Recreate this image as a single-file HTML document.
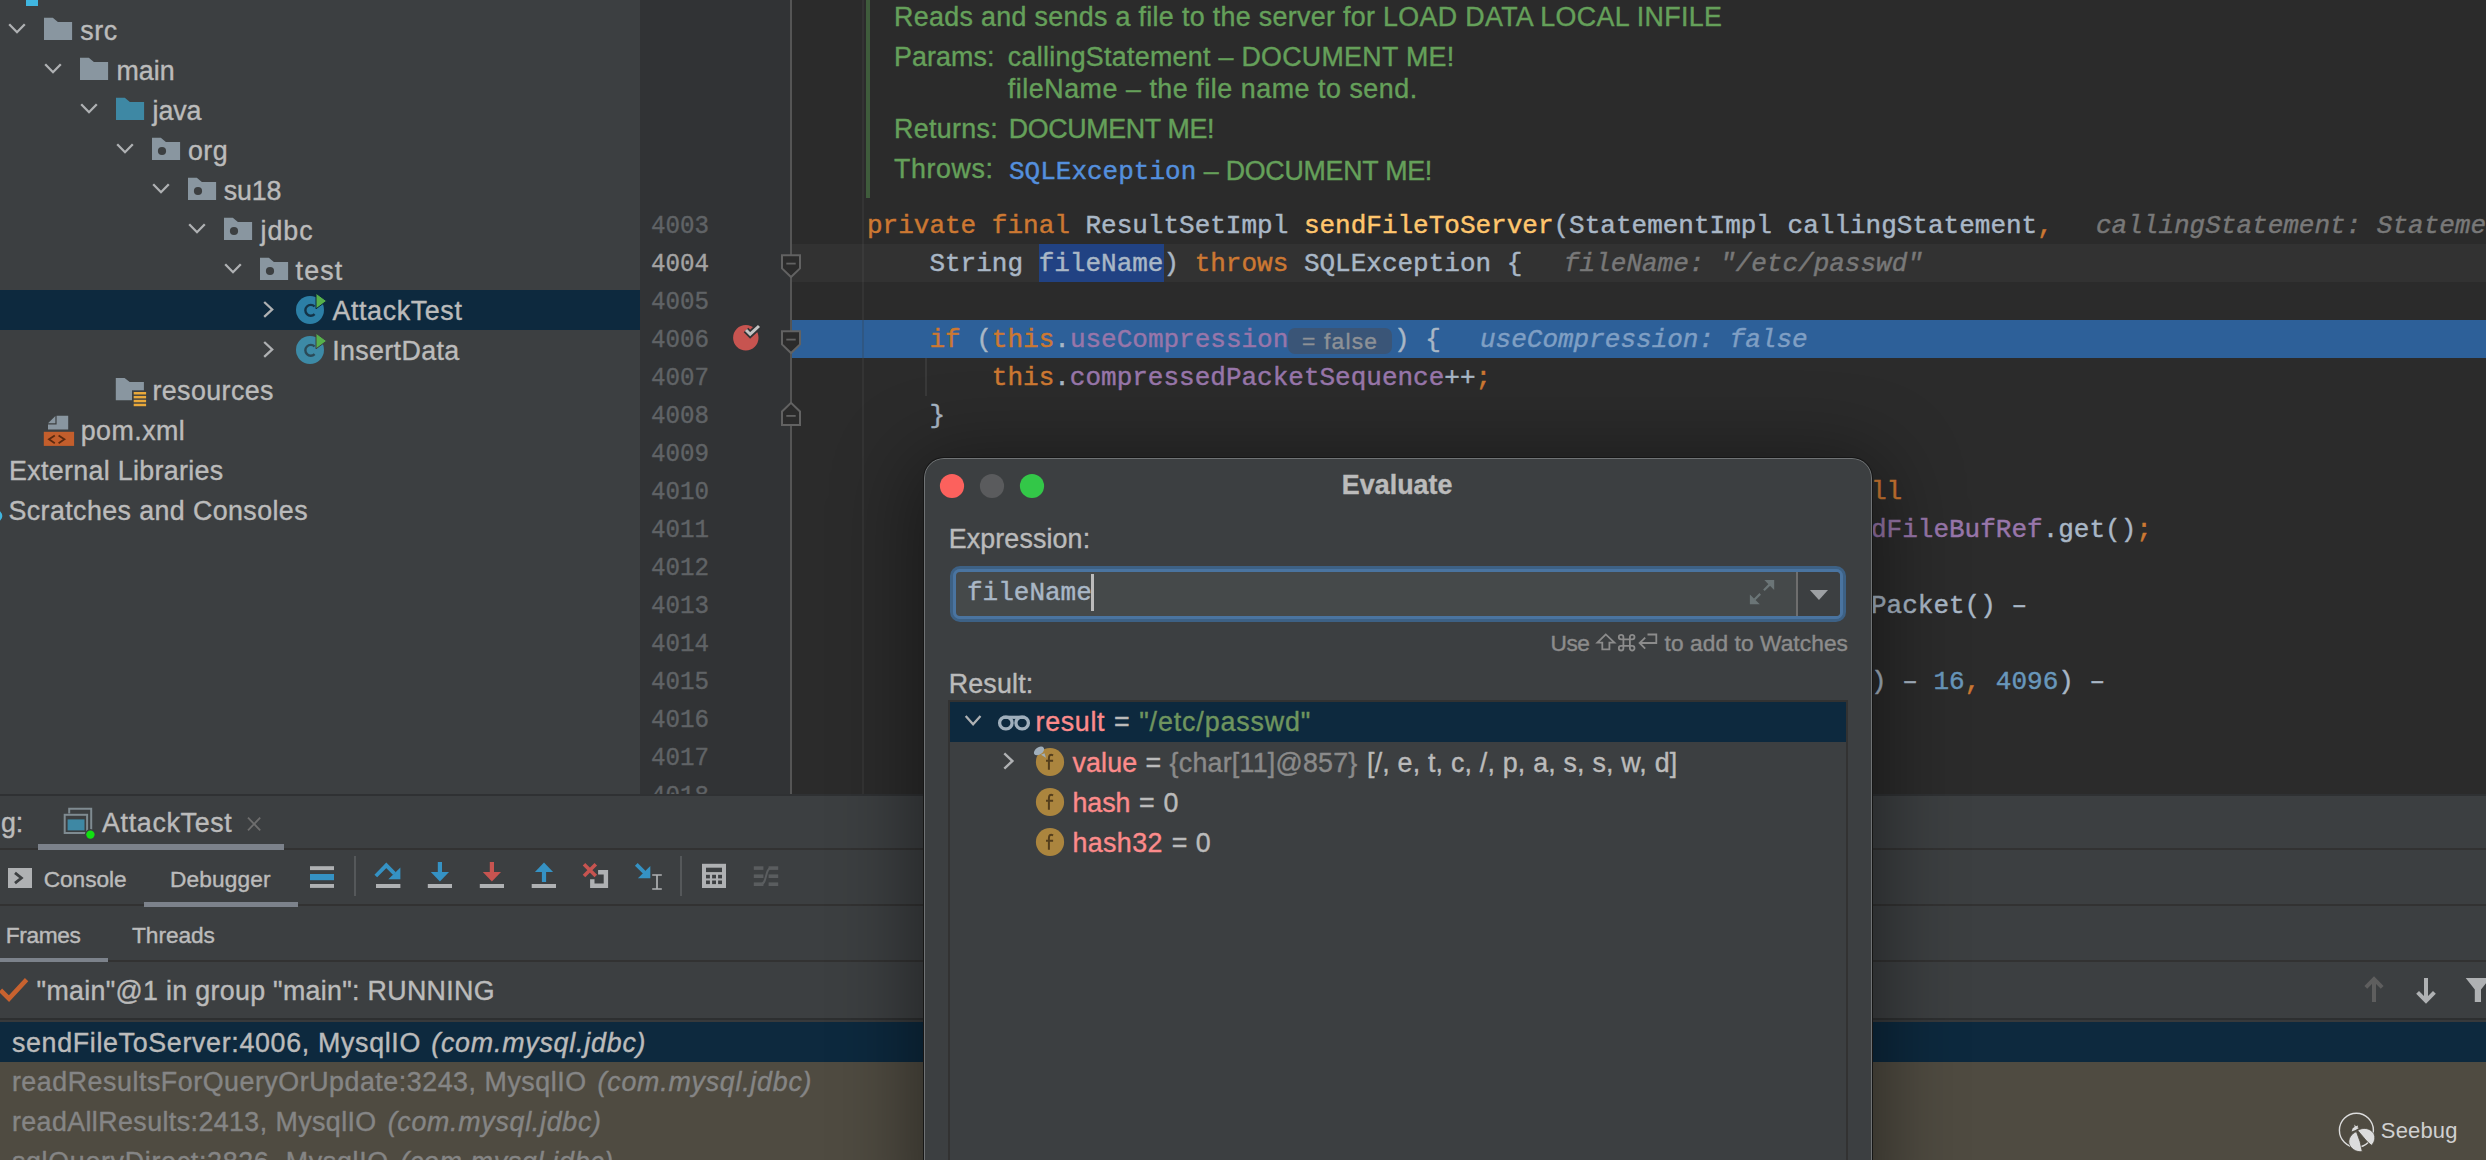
<!DOCTYPE html>
<html><head><meta charset="utf-8"><title>Evaluate</title>
<style>
html,body{margin:0;padding:0;}
body{width:2486px;height:1160px;overflow:hidden;background:#3c3f41;position:relative;font-family:"Liberation Sans",sans-serif;}
.abs{position:absolute;}
.t{position:absolute;white-space:pre;line-height:1em;font-family:"Liberation Sans",sans-serif;-webkit-text-stroke:0.4px currentColor;}
.code{position:absolute;white-space:pre;font-family:"Liberation Mono",monospace;font-size:26px;line-height:38px;height:38px;color:#a9b7c6;-webkit-text-stroke:0.45px currentColor;}
.k{color:#cc7832}.m{color:#ffc66d}.f{color:#9876aa}.n{color:#6897bb}
.h{color:#787878;font-style:italic}
.ln{position:absolute;left:651px;transform:scaleX(.93);transform-origin:0 0;font-family:"Liberation Mono",monospace;font-size:26px;line-height:38px;height:38px;color:#606366;white-space:pre;-webkit-text-stroke:0.4px currentColor;}
#editor{position:absolute;left:640px;top:0;width:1846px;height:794px;overflow:hidden;background:#2b2b2b;}
#dlg{position:absolute;left:924px;top:458px;width:948px;height:760px;background:#3c3f41;border-radius:20px 20px 0 0;box-shadow:0 0 0 1px #161616,0 12px 80px 12px rgba(0,0,0,.42);overflow:hidden;}
#dlg:after{content:"";position:absolute;left:0;top:0;right:0;bottom:0;border:1.4px solid #707375;border-radius:20px 20px 0 0;pointer-events:none;}
svg{position:absolute;left:0;top:0;overflow:visible;}
</style></head><body>

<!-- ============ project tree selection ============ -->
<div class="abs" style="left:0;top:290px;width:640px;height:40px;background:#0d293e"></div>

<!-- ============ editor ============ -->
<div id="editor">
  <!-- coordinates inside editor are page-x minus 640 -->
  <div class="abs" style="left:0;top:0;width:150px;height:794px;background:#313335"></div>
  <div class="abs" style="left:152px;top:244px;width:1700px;height:38px;background:#323232"></div>
  <div class="abs" style="left:152px;top:320px;width:1700px;height:38px;background:#2d6099"></div>
  <div class="abs" style="left:150px;top:0;width:2px;height:794px;background:#555555"></div>
  <div class="abs" style="left:222px;top:0;width:2px;height:794px;background:rgba(128,128,128,.11)"></div>
  <div class="abs" style="left:222px;top:320px;width:2px;height:38px;background:rgba(0,0,0,.12)"></div>
  <!-- doc bar -->
  <div class="abs" style="left:226px;top:0;width:4px;height:198px;background:#3f5c3c"></div>
  <!-- indent guide -->
  <div class="abs" style="left:285px;top:358px;width:1.5px;height:38px;background:#393939"></div>
  <!-- selection -->
  <div class="abs" style="left:399px;top:244px;width:125px;height:38px;background:#214283"></div>
  <!-- inline pill -->
  <div class="abs" style="left:648px;top:328px;width:104px;height:26px;background:#3a5577;border-radius:7px"></div>
</div>

<!-- line numbers -->
<div id="lns" class="abs" style="left:0;top:0;width:2486px;height:794px;overflow:hidden">
<div class="ln" style="top:207px">4003</div>
<div class="ln" style="top:245px;color:#a4a3a3">4004</div>
<div class="ln" style="top:283px">4005</div>
<div class="ln" style="top:321px">4006</div>
<div class="ln" style="top:359px">4007</div>
<div class="ln" style="top:397px">4008</div>
<div class="ln" style="top:435px">4009</div>
<div class="ln" style="top:473px">4010</div>
<div class="ln" style="top:511px">4011</div>
<div class="ln" style="top:549px">4012</div>
<div class="ln" style="top:587px">4013</div>
<div class="ln" style="top:625px">4014</div>
<div class="ln" style="top:663px">4015</div>
<div class="ln" style="top:701px">4016</div>
<div class="ln" style="top:739px">4017</div>
<div class="ln" style="top:777px">4018</div>

<!-- code -->
<div class="code" style="left:867px;top:207px"><span class="k">private final </span>ResultSetImpl <span class="m">sendFileToServer</span>(StatementImpl callingStatement<span class="k">,</span></div>
<div class="code h" style="left:2096px;top:207px">callingStatement: StatementImpl</div>
<div class="code" style="left:867px;top:245px">    String fileName) <span class="k">throws </span>SQLException {</div>
<div class="code h" style="left:1564px;top:245px">fileName: "/etc/passwd"</div>
<div class="code" style="left:867px;top:321px">    <span class="k">if </span>(<span class="k">this</span>.<span class="f">useCompression</span></div>
<div class="code" style="left:1394px;top:321px">) {</div>
<div class="code h" style="left:1480px;top:321px;color:#7f9fc4">useCompression: false</div>
<div class="code" style="left:867px;top:359px">        <span class="k">this</span>.<span class="f">compressedPacketSequence</span>++<span class="k">;</span></div>
<div class="code" style="left:867px;top:397px">    }</div>
<div class="code" style="left:1871px;top:473px"><span class="k">ll</span></div>
<div class="code" style="left:1871px;top:511px"><span class="f">dFileBufRef</span>.get()<span class="k">;</span></div>
<div class="code" style="left:1871px;top:587px">Packet() –</div>
<div class="code" style="left:1871px;top:663px">) – <span class="n">16</span><span class="k">, </span><span class="n">4096</span>) –</div>
<div class="code" style="left:1009px;top:153px;color:#548fdd">SQLException</div>
</div>

<!-- ============ bottom panel ============ -->
<div class="abs" style="left:0;top:794px;width:2486px;height:2px;background:#2f3133"></div>
<div class="abs" style="left:0;top:848px;width:2486px;height:2px;background:#323232"></div>
<div class="abs" style="left:0;top:904px;width:2486px;height:2px;background:#323232"></div>
<div class="abs" style="left:0;top:960px;width:2486px;height:2px;background:#323232"></div>
<div class="abs" style="left:0;top:1018px;width:2486px;height:2px;background:#2d2f30"></div>
<div class="abs" style="left:0;top:1020px;width:2486px;height:2px;background:#37393b"></div>
<div class="abs" style="left:0;top:1022px;width:2486px;height:40px;background:#0d293e"></div>
<div class="abs" style="left:0;top:1062px;width:2486px;height:98px;background:#4f4b41"></div>
<!-- tab underlines -->
<div class="abs" style="left:38px;top:844px;width:246px;height:6px;background:#7c828b"></div>
<div class="abs" style="left:144px;top:902px;width:154px;height:5px;background:#7c828b"></div>
<div class="abs" style="left:0;top:958px;width:108px;height:4px;background:#7c828b"></div>

<span class="t" style="left:80.2px;top:17.8px;font-size:26.8px;color:#bbbbbb;letter-spacing:0.66px;">src</span>
<span class="t" style="left:116.4px;top:57.8px;font-size:26.8px;color:#bbbbbb;letter-spacing:0.08px;">main</span>
<span class="t" style="left:152.5px;top:97.8px;font-size:26.8px;color:#bbbbbb;letter-spacing:-0.07px;">java</span>
<span class="t" style="left:188.0px;top:137.8px;font-size:26.8px;color:#bbbbbb;letter-spacing:0.46px;">org</span>
<span class="t" style="left:223.8px;top:177.8px;font-size:26.8px;color:#bbbbbb;letter-spacing:-0.18px;">su18</span>
<span class="t" style="left:260.5px;top:217.8px;font-size:26.8px;color:#bbbbbb;letter-spacing:0.98px;">jdbc</span>
<span class="t" style="left:295.6px;top:257.8px;font-size:26.8px;color:#bbbbbb;letter-spacing:1.17px;">test</span>
<span class="t" style="left:332.4px;top:297.8px;font-size:26.8px;color:#bbbbbb;letter-spacing:0.65px;">AttackTest</span>
<span class="t" style="left:332.2px;top:337.8px;font-size:26.8px;color:#bbbbbb;letter-spacing:0.37px;">InsertData</span>
<span class="t" style="left:152.4px;top:377.5px;font-size:26.8px;color:#bbbbbb;letter-spacing:0.43px;">resources</span>
<span class="t" style="left:80.7px;top:417.5px;font-size:26.8px;color:#bbbbbb;letter-spacing:0.48px;">pom.xml</span>
<span class="t" style="left:9.0px;top:457.5px;font-size:26.8px;color:#bbbbbb;letter-spacing:0.33px;">External Libraries</span>
<span class="t" style="left:8.5px;top:497.5px;font-size:26.8px;color:#bbbbbb;letter-spacing:0.41px;">Scratches and Consoles</span>
<span class="t" style="left:894.0px;top:4.1px;font-size:26.8px;color:#65a05a;letter-spacing:0.34px;">Reads and sends a file to the server for LOAD DATA LOCAL INFILE</span>
<span class="t" style="left:894.0px;top:43.6px;font-size:26.8px;color:#65a05a;letter-spacing:0.10px;">Params:</span>
<span class="t" style="left:1007.8px;top:43.6px;font-size:26.8px;color:#65a05a;letter-spacing:0.30px;">callingStatement – DOCUMENT ME!</span>
<span class="t" style="left:1007.8px;top:75.8px;font-size:26.8px;color:#65a05a;letter-spacing:0.55px;">fileName – the file name to send.</span>
<span class="t" style="left:894.0px;top:115.8px;font-size:26.8px;color:#65a05a;letter-spacing:0.35px;">Returns:</span>
<span class="t" style="left:1008.8px;top:115.8px;font-size:26.8px;color:#65a05a;letter-spacing:-0.35px;">DOCUMENT ME!</span>
<span class="t" style="left:894.0px;top:155.8px;font-size:26.8px;color:#65a05a;letter-spacing:0.60px;">Throws:</span>
<span class="t" style="left:1203.8px;top:157.8px;font-size:26.8px;color:#65a05a;letter-spacing:-0.25px;">– DOCUMENT ME!</span>
<span class="t" style="left:-63.0px;top:809.8px;font-size:26.8px;color:#bbbbbb;letter-spacing:-0.04px;">Debug:</span>
<span class="t" style="left:102.0px;top:809.8px;font-size:26.8px;color:#bbbbbb;letter-spacing:0.69px;">AttackTest</span>
<span class="t" style="left:43.8px;top:867.6px;font-size:22.7px;color:#bbbbbb;letter-spacing:-0.09px;">Console</span>
<span class="t" style="left:170.0px;top:867.6px;font-size:22.7px;color:#bbbbbb;letter-spacing:0.14px;">Debugger</span>
<span class="t" style="left:5.8px;top:923.6px;font-size:22.7px;color:#bbbbbb;letter-spacing:-0.37px;">Frames</span>
<span class="t" style="left:132.0px;top:923.6px;font-size:22.7px;color:#bbbbbb;letter-spacing:-0.05px;">Threads</span>
<span class="t" style="left:36.6px;top:977.8px;font-size:26.8px;color:#bbbbbb;letter-spacing:0.31px;">&quot;main&quot;@1 in group &quot;main&quot;: RUNNING</span>
<span class="t" style="left:11.9px;top:1029.5px;font-size:26.8px;color:#bbbbbb;letter-spacing:0.68px;">sendFileToServer:4006, MysqlIO</span>
<span class="t" style="left:431.2px;top:1029.5px;font-size:26.8px;color:#bbbbbb;letter-spacing:0.79px;font-style:italic;">(com.mysql.jdbc)</span>
<span class="t" style="left:11.9px;top:1069.2px;font-size:26.8px;color:#858585;letter-spacing:0.54px;">readResultsForQueryOrUpdate:3243, MysqlIO</span>
<span class="t" style="left:597.6px;top:1069.2px;font-size:26.8px;color:#858585;letter-spacing:0.76px;font-style:italic;">(com.mysql.jdbc)</span>
<span class="t" style="left:11.9px;top:1109.0px;font-size:26.8px;color:#858585;letter-spacing:0.42px;">readAllResults:2413, MysqlIO</span>
<span class="t" style="left:387.7px;top:1109.0px;font-size:26.8px;color:#858585;letter-spacing:0.72px;font-style:italic;">(com.mysql.jdbc)</span>
<span class="t" style="left:11.9px;top:1148.8px;font-size:26.8px;color:#858585;letter-spacing:0.70px;">sqlQueryDirect:2826, MysqlIO</span>
<span class="t" style="left:400.0px;top:1148.8px;font-size:26.8px;color:#858585;letter-spacing:0.72px;font-style:italic;">(com.mysql.jdbc)</span>
<span class="t" style="left:2380.8px;top:1119.9px;font-size:22.0px;color:#d0d0d0;letter-spacing:0.17px;-webkit-text-stroke:0;">Seebug</span>
<span class="t" style="left:1302.0px;top:329.6px;font-size:22.7px;color:#8d9196;letter-spacing:1.23px;">= false</span>

<svg id="ic" width="2486" height="1160" viewBox="0 0 2486 1160">
<rect x="26" y="-2" width="12" height="8" fill="#40b6e0"/>
<circle cx="-3.5" cy="516" r="5.8" fill="#40b6e0"/>
<polyline points="9.2,24.2 17.0,32.2 24.8,24.2" fill="none" stroke="#afb1b3" stroke-width="2.3"/>
<polyline points="45.2,64.2 53.0,72.2 60.8,64.2" fill="none" stroke="#afb1b3" stroke-width="2.3"/>
<polyline points="81.2,104.2 89.0,112.2 96.8,104.2" fill="none" stroke="#afb1b3" stroke-width="2.3"/>
<polyline points="117.2,144.2 125.0,152.2 132.8,144.2" fill="none" stroke="#afb1b3" stroke-width="2.3"/>
<polyline points="153.2,184.2 161.0,192.2 168.8,184.2" fill="none" stroke="#afb1b3" stroke-width="2.3"/>
<polyline points="189.2,224.2 197.0,232.2 204.8,224.2" fill="none" stroke="#afb1b3" stroke-width="2.3"/>
<polyline points="225.2,264.2 233.0,272.2 240.8,264.2" fill="none" stroke="#afb1b3" stroke-width="2.3"/>
<polyline points="264.2,302.0 272.2,309.4 264.2,316.8" fill="none" stroke="#afb1b3" stroke-width="2.3"/>
<polyline points="264.2,342.0 272.2,349.4 264.2,356.8" fill="none" stroke="#afb1b3" stroke-width="2.3"/>
<path d="M44.0,17.8 h8.8 l5.1,4.1 h14.2 v18.1 h-28.1 z" fill="#8996a0"/>
<path d="M80.0,57.8 h8.8 l5.1,4.1 h14.2 v18.1 h-28.1 z" fill="#8996a0"/>
<path d="M116.0,97.8 h8.8 l5.1,4.1 h14.2 v18.1 h-28.1 z" fill="#3e88a4"/>
<path d="M152.0,137.8 h8.8 l5.1,4.1 h14.2 v18.1 h-28.1 z" fill="#8996a0"/><circle cx="162.0" cy="151.0" r="4.1" fill="#3c3f41"/>
<path d="M188.0,177.8 h8.8 l5.1,4.1 h14.2 v18.1 h-28.1 z" fill="#8996a0"/><circle cx="198.0" cy="191.0" r="4.1" fill="#3c3f41"/>
<path d="M224.0,217.8 h8.8 l5.1,4.1 h14.2 v18.1 h-28.1 z" fill="#8996a0"/><circle cx="234.0" cy="231.0" r="4.1" fill="#3c3f41"/>
<path d="M260.0,257.8 h8.8 l5.1,4.1 h14.2 v18.1 h-28.1 z" fill="#8996a0"/><circle cx="270.0" cy="271.0" r="4.1" fill="#3c3f41"/>
<circle cx="310.0" cy="310.0" r="14" fill="#2c7fa6"/><path d="M314.6,306.5 a5.4,5.4 0 1 0 0,7.6" fill="none" stroke="#143347" stroke-width="2.4"/><polygon points="316.0,293.2 326.6,301.0 316.0,308.8" fill="#57b04a" stroke="#0d293e" stroke-width="1"/>
<circle cx="310.0" cy="350.0" r="14" fill="#3d8aa6"/><path d="M314.6,346.5 a5.4,5.4 0 1 0 0,7.6" fill="none" stroke="#2b4a57" stroke-width="2.4"/><polygon points="316.0,333.2 326.6,341.0 316.0,348.8" fill="#57b04a" stroke="#3c3f41" stroke-width="1"/>
<path d="M115.8,378.0 h8.8 l5.1,4.1 h14.2 v18.1 h-28.1 z" fill="#8996a0"/>
<rect x="132" y="390.3" width="16" height="17.5" fill="#3c3f41"/>
<rect x="133.7" y="392.0" width="12.4" height="2.5" fill="#eaa93a"/>
<rect x="133.7" y="395.9" width="12.4" height="2.5" fill="#eaa93a"/>
<rect x="133.7" y="399.8" width="12.4" height="2.5" fill="#eaa93a"/>
<rect x="133.7" y="403.7" width="12.4" height="2.5" fill="#eaa93a"/>
<polygon points="56.6,415.8 68.2,415.8 68.2,429.6 48,429.6 48,424.6 56.6,424.6" fill="#8996a0"/>
<polygon points="48,423.3 55.4,415.9 55.4,423.3" fill="#8996a0"/>
<rect x="43.8" y="431.8" width="30.3" height="14.1" fill="#c35e2c"/>
<polyline points="54.8,435.4 49,439.3 54.8,443.2" fill="none" stroke="#5b2a10" stroke-width="1.8"/>
<polyline points="58.6,435.4 64.4,439.3 58.6,443.2" fill="none" stroke="#5b2a10" stroke-width="1.8"/>
<path d="M782,255.2 h18 v13.2 l-9,8.6 l-9,-8.6 z" fill="#2b2b2b" stroke="#626262" stroke-width="2"/><line x1="786.3" y1="263.6" x2="795.7" y2="263.6" stroke="#626262" stroke-width="1.8"/>
<path d="M782,331.2 h18 v13.2 l-9,8.6 l-9,-8.6 z" fill="#2b2b2b" stroke="#626262" stroke-width="2"/><line x1="786.3" y1="339.6" x2="795.7" y2="339.6" stroke="#626262" stroke-width="1.8"/>
<path d="M782,424.9 h18 v-13.4 l-9,-8.7 l-9,8.7 z" fill="#2b2b2b" stroke="#626262" stroke-width="2"/><line x1="786.3" y1="415.9" x2="795.7" y2="415.9" stroke="#626262" stroke-width="1.8"/>
<circle cx="745.8" cy="337.7" r="12.7" fill="#c75450"/>
<polyline points="746,330 750.2,334.2 759,326" fill="none" stroke="#313335" stroke-width="6.5"/>
<polyline points="746,330 750.2,334.2 759,326" fill="none" stroke="#c4c4c4" stroke-width="3"/>
<polyline points="69.2,813.5 69.2,808.8 91.2,808.8 91.2,831 88.6,831" fill="none" stroke="#7f8b91" stroke-width="2"/>
<rect x="64.7" y="814.8" width="22.4" height="18.2" fill="none" stroke="#7f8b91" stroke-width="2"/>
<rect x="67.6" y="819.4" width="16.9" height="11" fill="#3e88a4"/>
<circle cx="90.4" cy="834.6" r="5.6" fill="#3c3f41"/><circle cx="90.4" cy="834.6" r="4.2" fill="#12e012"/>
<path d="M248,817.6 L260.2,830.4 M260.2,817.6 L248,830.4" stroke="#6e6e6e" stroke-width="1.8" fill="none"/>
<rect x="8" y="868" width="24" height="20" fill="#afb1b3"/>
<polyline points="15,872.8 21.4,878 15,883.2" fill="none" stroke="#3c3f41" stroke-width="2.8"/>
<rect x="310" y="866.2" width="24" height="3.9" fill="#afb1b3"/><rect x="310" y="874" width="24" height="6.2" fill="#3592c4"/><rect x="310" y="884" width="24" height="3.9" fill="#afb1b3"/>
<rect x="354" y="856" width="2" height="40" fill="#55585a"/><rect x="680" y="856" width="2" height="40" fill="#55585a"/>
<rect x="376" y="884" width="24.4" height="4" fill="#afb1b3"/>
<polyline points="375.8,876 386.3,865.3 394.5,873.6" fill="none" stroke="#3592c4" stroke-width="3.8"/>
<polygon points="388.3,879.2 400.4,867.6 400.4,879.2" fill="#3592c4"/>
<rect x="427.8" y="884" width="24.2" height="4" fill="#afb1b3"/><rect x="437.8" y="862" width="4.2" height="10.5" fill="#3592c4"/><polygon points="430.8,872.1 449.0,872.1 439.9,881.6" fill="#3592c4"/>
<rect x="479.8" y="884" width="24.2" height="4" fill="#afb1b3"/><rect x="489.8" y="862" width="4.2" height="10.5" fill="#c75450"/><polygon points="482.8,872.1 501.0,872.1 491.9,881.6" fill="#c75450"/>
<rect x="531.7" y="884" width="24.3" height="4" fill="#afb1b3"/><rect x="541.9" y="871.8" width="4.2" height="10.2" fill="#3592c4"/><polygon points="534.9,872.1 553.1,872.1 544,862.6" fill="#3592c4"/>
<polygon points="598.1,870 608.1,870 608.1,888 590.1,888 590.1,879.2 594.5,879.2 594.5,883.6 603.7,883.6 603.7,874.4 598.1,874.4" fill="#afb1b3"/>
<path d="M584,864.2 L595.8,876 M595.8,864.2 L584,876" stroke="#c75450" stroke-width="3.6" fill="none"/>
<polygon points="650.3,865.9 650.3,878.3 637.9,878.3" fill="#3592c4"/><line x1="636.3" y1="864.4" x2="646" y2="874" stroke="#3592c4" stroke-width="3.8"/>
<path d="M657,875 V889 M652.2,875 H661.8 M652.2,889 H661.8" stroke="#afb1b3" stroke-width="1.7" fill="none"/>
<rect x="702" y="863.8" width="24" height="24.2" fill="#afb1b3"/>
<rect x="706" y="867.7" width="16" height="4.4" fill="#3c3f41"/>
<rect x="706.0" y="874.8" width="3.9" height="3.6" fill="#3c3f41"/>
<rect x="706.0" y="880.5" width="3.9" height="3.6" fill="#3c3f41"/>
<rect x="712.1" y="874.8" width="3.9" height="3.6" fill="#3c3f41"/>
<rect x="712.1" y="880.5" width="3.9" height="3.6" fill="#3c3f41"/>
<rect x="718.1" y="874.8" width="3.9" height="3.6" fill="#3c3f41"/>
<rect x="718.1" y="880.5" width="3.9" height="3.6" fill="#3c3f41"/>
<rect x="753.8" y="866.3" width="9.6" height="3.6" fill="#5a5d5f"/><rect x="768.6" y="866.3" width="9.6" height="3.6" fill="#5a5d5f"/>
<rect x="753.8" y="874.4" width="9.6" height="3.6" fill="#5a5d5f"/><rect x="768.6" y="874.4" width="9.6" height="3.6" fill="#5a5d5f"/>
<rect x="753.8" y="882.4" width="9.6" height="3.6" fill="#5a5d5f"/><rect x="768.6" y="882.4" width="9.6" height="3.6" fill="#5a5d5f"/>
<path d="M761,884.2 C767,884.2 765,868.1 771,868.1" fill="none" stroke="#5a5d5f" stroke-width="2"/>
<polyline points="0.5,990.2 9,998.6 26.6,979.6" fill="none" stroke="#c8622f" stroke-width="4.6"/>
<path d="M2374,980.5 V1002 M2365.8,987.4 L2374,979.2 L2382.2,987.4" fill="none" stroke="#5e5e5e" stroke-width="4"/>
<path d="M2426,978 V999.5 M2417.6,992.4 L2426,1000.8 L2434.4,992.4" fill="none" stroke="#afb1b3" stroke-width="4"/>
<polygon points="2465.7,978 2490.3,978 2481,989.5 2481,1002 2474.8,1002 2474.8,989.5" fill="#afb1b3"/>
<circle cx="2356.4" cy="1130.2" r="17" fill="none" stroke="#dcdcdc" stroke-width="1.4"/>
<path d="M2356.4,1131.6 C2351,1134 2348,1139 2349,1143.5 C2350.5,1148.5 2356,1152.5 2362.3,1151.6 L2360.1,1141.7 Z" fill="#dcdcdc" stroke="#4f4b41" stroke-width="0.8"/>
<path d="M2357.7,1130.4 C2363,1127 2370,1128 2373.6,1133.2 C2376,1137.5 2374.5,1142.5 2371.4,1145.3 L2366.7,1141.1 Z" fill="#dcdcdc" stroke="#4f4b41" stroke-width="0.8"/>
<polygon points="2351.6,1131.6 2352.7,1128.2 2354.6,1127 2354.3,1124.6 2355.9,1126.2 2358.1,1125.4 2357.6,1127.4 2358.9,1127.9 2355.6,1129.9" fill="#dcdcdc"/>
</svg>

<!-- ============ dialog ============ -->
<div id="dlg"><div class="abs" style="left:-924px;top:-458px;width:2486px;height:1300px">
  <!-- page coordinates inside -->
  <div class="abs" style="left:950px;top:566px;width:896px;height:56px;box-sizing:border-box;border:3px solid #3d6185;border-radius:10px;background:#467098"></div>
  <div class="abs" style="left:953px;top:569px;width:890px;height:50px;box-sizing:border-box;border:3px solid #4a74a0;border-radius:7px;background:#45494a"></div>
  <div class="abs" style="left:1798px;top:572px;width:42px;height:44px;background:#3c3f41;border-radius:0 4px 4px 0"></div>
  <div class="abs" style="left:1796px;top:572px;width:2px;height:44px;background:#6e6e6e"></div>
  <div class="code" style="left:967px;top:574px;">fileName</div>
  <div class="abs" style="left:1091px;top:574px;width:2.6px;height:37px;background:#bbbbbb"></div>
  <!-- result tree -->
  <div class="abs" style="left:948px;top:700px;width:900px;height:600px;box-sizing:border-box;border:2px solid #323232;background:#3c3f41"></div>
  <div class="abs" style="left:950px;top:702px;width:896px;height:39.6px;background:#0d293e"></div>
<span class="t" style="left:1341.8px;top:471.8px;font-size:26.8px;color:#bbbbbb;letter-spacing:0.06px;font-weight:bold;">Evaluate</span>
<span class="t" style="left:948.7px;top:525.6px;font-size:26.8px;color:#bbbbbb;letter-spacing:0.14px;">Expression:</span>
<span class="t" style="left:1550.6px;top:631.6px;font-size:22.7px;color:#8c8c8c;letter-spacing:-0.59px;">Use</span>
<span class="t" style="left:1664.5px;top:631.6px;font-size:22.7px;color:#8c8c8c;letter-spacing:0.09px;">to add to Watches</span>
<span class="t" style="left:948.7px;top:671.4px;font-size:26.8px;color:#bbbbbb;letter-spacing:0.20px;">Result:</span>
<span class="t" style="left:1035.6px;top:709.1px;font-size:26.8px;color:#fc8b8b;letter-spacing:0.68px;">result</span>
<span class="t" style="left:1113.9px;top:709.1px;font-size:26.8px;color:#bbbbbb;letter-spacing:0.14px;">=</span>
<span class="t" style="left:1139.2px;top:709.1px;font-size:26.8px;color:#6f955e;letter-spacing:0.89px;">&quot;/etc/passwd&quot;</span>
<span class="t" style="left:1072.5px;top:749.8px;font-size:26.8px;color:#fc8b8b;letter-spacing:0.15px;">value</span>
<span class="t" style="left:1145.5px;top:749.8px;font-size:26.8px;color:#bbbbbb;letter-spacing:-0.16px;">=</span>
<span class="t" style="left:1169.6px;top:749.8px;font-size:26.8px;color:#8a8a8a;letter-spacing:0.23px;">{char[11]@857}</span>
<span class="t" style="left:1367.0px;top:749.8px;font-size:26.8px;color:#bbbbbb;letter-spacing:0.20px;">[/, e, t, c, /, p, a, s, s, w, d]</span>
<span class="t" style="left:1072.5px;top:789.6px;font-size:26.8px;color:#fc8b8b;letter-spacing:-0.03px;">hash</span>
<span class="t" style="left:1139.0px;top:789.6px;font-size:26.8px;color:#bbbbbb;letter-spacing:-0.16px;">=</span>
<span class="t" style="left:1163.4px;top:789.6px;font-size:26.8px;color:#bbbbbb;letter-spacing:0.39px;">0</span>
<span class="t" style="left:1072.5px;top:829.5px;font-size:26.8px;color:#fc8b8b;letter-spacing:0.38px;">hash32</span>
<span class="t" style="left:1171.8px;top:829.5px;font-size:26.8px;color:#bbbbbb;letter-spacing:-0.66px;">=</span>
<span class="t" style="left:1195.8px;top:829.5px;font-size:26.8px;color:#bbbbbb;letter-spacing:0.59px;">0</span>
  <svg width="2486" height="1300" viewBox="0 0 2486 1300">
<circle cx="952" cy="486" r="12.1" fill="#fc615d"/><circle cx="992" cy="486" r="12.1" fill="#5a5b5d"/><circle cx="1032" cy="486" r="12.1" fill="#33c748"/>
<polygon points="1764.3,580 1774.2,580 1774.2,589.9" fill="#6b7577"/><polygon points="1749.9,594.4 1749.9,604.2 1759.8,604.2" fill="#6b7577"/>
<path d="M1769.6,584.6 L1763.9,590.3 M1760.2,593.9 L1754.6,599.5" stroke="#6b7577" stroke-width="2.2" fill="none"/>
<polygon points="1809.9,590 1828,590 1818.95,600" fill="#9da0a3"/>
<polyline points="965.7,716 973.1,724.3 980.5,716" fill="none" stroke="#afb1b3" stroke-width="2.3"/>
<rect x="999.6" y="717.1" width="12.5" height="11.7" rx="5.9" ry="5.8" fill="none" stroke="#a0afbc" stroke-width="3.3"/><rect x="1015.9" y="717.1" width="12.5" height="11.7" rx="5.9" ry="5.8" fill="none" stroke="#a0afbc" stroke-width="3.3"/>
<path d="M1003,717.3 H1025" stroke="#a0afbc" stroke-width="3.2" fill="none"/>
<polyline points="1004.3,753.4 1012.4,761 1004.3,768.6" fill="none" stroke="#afb1b3" stroke-width="2.4"/>
<circle cx="1050.0" cy="762.0" r="14.1" fill="#ab853e"/><path d="M1053.1,755.4 Q1048.9,753.4 1048.9,758.5 V769.8 M1046.0,760.8 H1053.1" fill="none" stroke="#543e1c" stroke-width="2"/>
<circle cx="1050.0" cy="802.0" r="14.1" fill="#ab853e"/><path d="M1053.1,795.4 Q1048.9,793.4 1048.9,798.5 V809.8 M1046.0,800.8 H1053.1" fill="none" stroke="#543e1c" stroke-width="2"/>
<circle cx="1050.0" cy="842.0" r="14.1" fill="#ab853e"/><path d="M1053.1,835.4 Q1048.9,833.4 1048.9,838.5 V849.8 M1046.0,840.8 H1053.1" fill="none" stroke="#543e1c" stroke-width="2"/>
<g transform="rotate(-35 1039 750.9)"><ellipse cx="1039" cy="750.9" rx="5.7" ry="3.6" fill="#a0afbc"/></g><polygon points="1041,754.7 1045.9,757.8 1044.5,753.3" fill="#a0afbc"/>
<polygon points="1605.8,634.4 1597.4,642.6 1602.3,642.6 1602.3,649.4 1609.4,649.4 1609.4,642.6 1614.4,642.6" fill="none" stroke="#8c8c8c" stroke-width="1.8" stroke-linejoin="miter"/>
<path d="M1623.4,639.4 V637.1 A2.3,2.3 0 1 0 1621.1,639.4 H1623.4 M1629.9,639.4 V637.1 A2.3,2.3 0 1 1 1632.2,639.4 H1629.9 M1623.4,645.9 V648.2 A2.3,2.3 0 1 1 1621.1,645.9 H1623.4 M1629.9,645.9 V648.2 A2.3,2.3 0 1 0 1632.2,645.9 H1629.9 M1623.4,639.4 H1629.9 V645.9 H1623.4 Z" fill="none" stroke="#8c8c8c" stroke-width="1.8"/>
<path d="M1647.5,634.5 H1656.3 V643 H1640 M1645.2,637.6 L1639.6,643 L1645.2,648.6" fill="none" stroke="#8c8c8c" stroke-width="1.8"/>
  </svg>
</div></div>
</body></html>
